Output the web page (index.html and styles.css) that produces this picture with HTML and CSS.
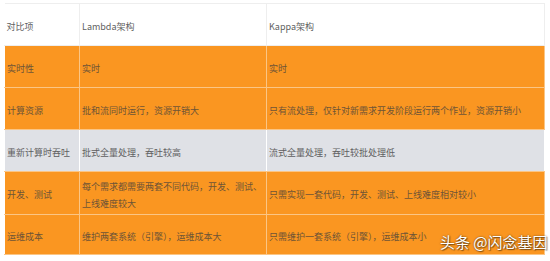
FILE: index.html
```html
<!DOCTYPE html>
<html>
<head>
<meta charset="utf-8">
<link rel="stylesheet" href="styles.css">
</head>
<body>
<div class="wrap">
  <table class="cmp">
    <colgroup>
      <col class="c1"><col class="c2"><col class="c3">
    </colgroup>
    <tr class="head">
      <td>对比项</td><td>Lambda架构</td><td>Kappa架构</td>
    </tr>
    <tr class="orange">
      <td>实时性</td><td>实时</td><td>实时</td>
    </tr>
    <tr class="orange">
      <td>计算资源</td><td>批和流同时运行，资源开销大</td><td>只有流处理，仅针对新需求开发阶段运行两个作业，资源开销小</td>
    </tr>
    <tr class="gray">
      <td>重新计算时吞吐</td><td>批式全量处理，吞吐较高</td><td>流式全量处理，吞吐较批处理低</td>
    </tr>
    <tr class="orange tall">
      <td>开发、测试</td><td>每个需求都需要两套不同代码，开发、测试、<br>上线难度较大</td><td>只需实现一套代码，开发、测试、上线难度相对较小</td>
    </tr>
    <tr class="orange last">
      <td>运维成本</td><td>维护两套系统（引擎），运维成本大</td><td>只需维护一套系统（引擎），运维成本小</td>
    </tr>
  </table>
  <div class="mark">头条 @闪念基因</div>
</div>
</body>
</html>
```
FILE: styles.css
```css
html, body {
  margin: 0;
  padding: 0;
  background: #ffffff;
}
.wrap {
  position: relative;
  width: 550px;
  height: 261px;
  padding: 3px 0 0 4px;
  box-sizing: border-box;
}
.cmp {
  border-collapse: collapse;
  table-layout: fixed;
  width: 540px;
  font-family: "Noto Sans CJK SC", "Noto Sans", sans-serif;
  font-size: 9px;
  line-height: 17px;
}
.c1 { width: 75px; }
.c2 { width: 187px; }
.c3 { width: 278px; }
.cmp td {
  height: 42px;
  box-sizing: border-box;
  padding: 3px 2px 0 2px;
  vertical-align: middle;
  white-space: nowrap;
}
.head td {
  background: #ffffff;
  color: #5f5f5f;
  border: 1px solid #eeeeee;
  border-left: none;
}
.orange td {
  background: #fa9621;
  color: #6e5436;
  border: 1px solid #fbc584;
}
.gray td {
  background: #dfe1e6;
  color: #5e5e60;
  border: 1px solid #fbc584;
  border-left-color: #ffffff;
  border-right-color: #ffffff;
}
.tall td { height: 43px; }
.last td { height: 40px; }
.cmp td:first-child { border-left-color: transparent; }
.mark {
  position: absolute;
  left: 440px;
  top: 233px;
  font-family: "Noto Sans CJK SC", sans-serif;
  font-size: 15px;
  line-height: 18px;
  color: #ffffff;
  text-shadow: 0 0 2px rgba(0,0,0,0.6), 1px 1px 1px rgba(0,0,0,0.4);
  white-space: nowrap;
}
```
